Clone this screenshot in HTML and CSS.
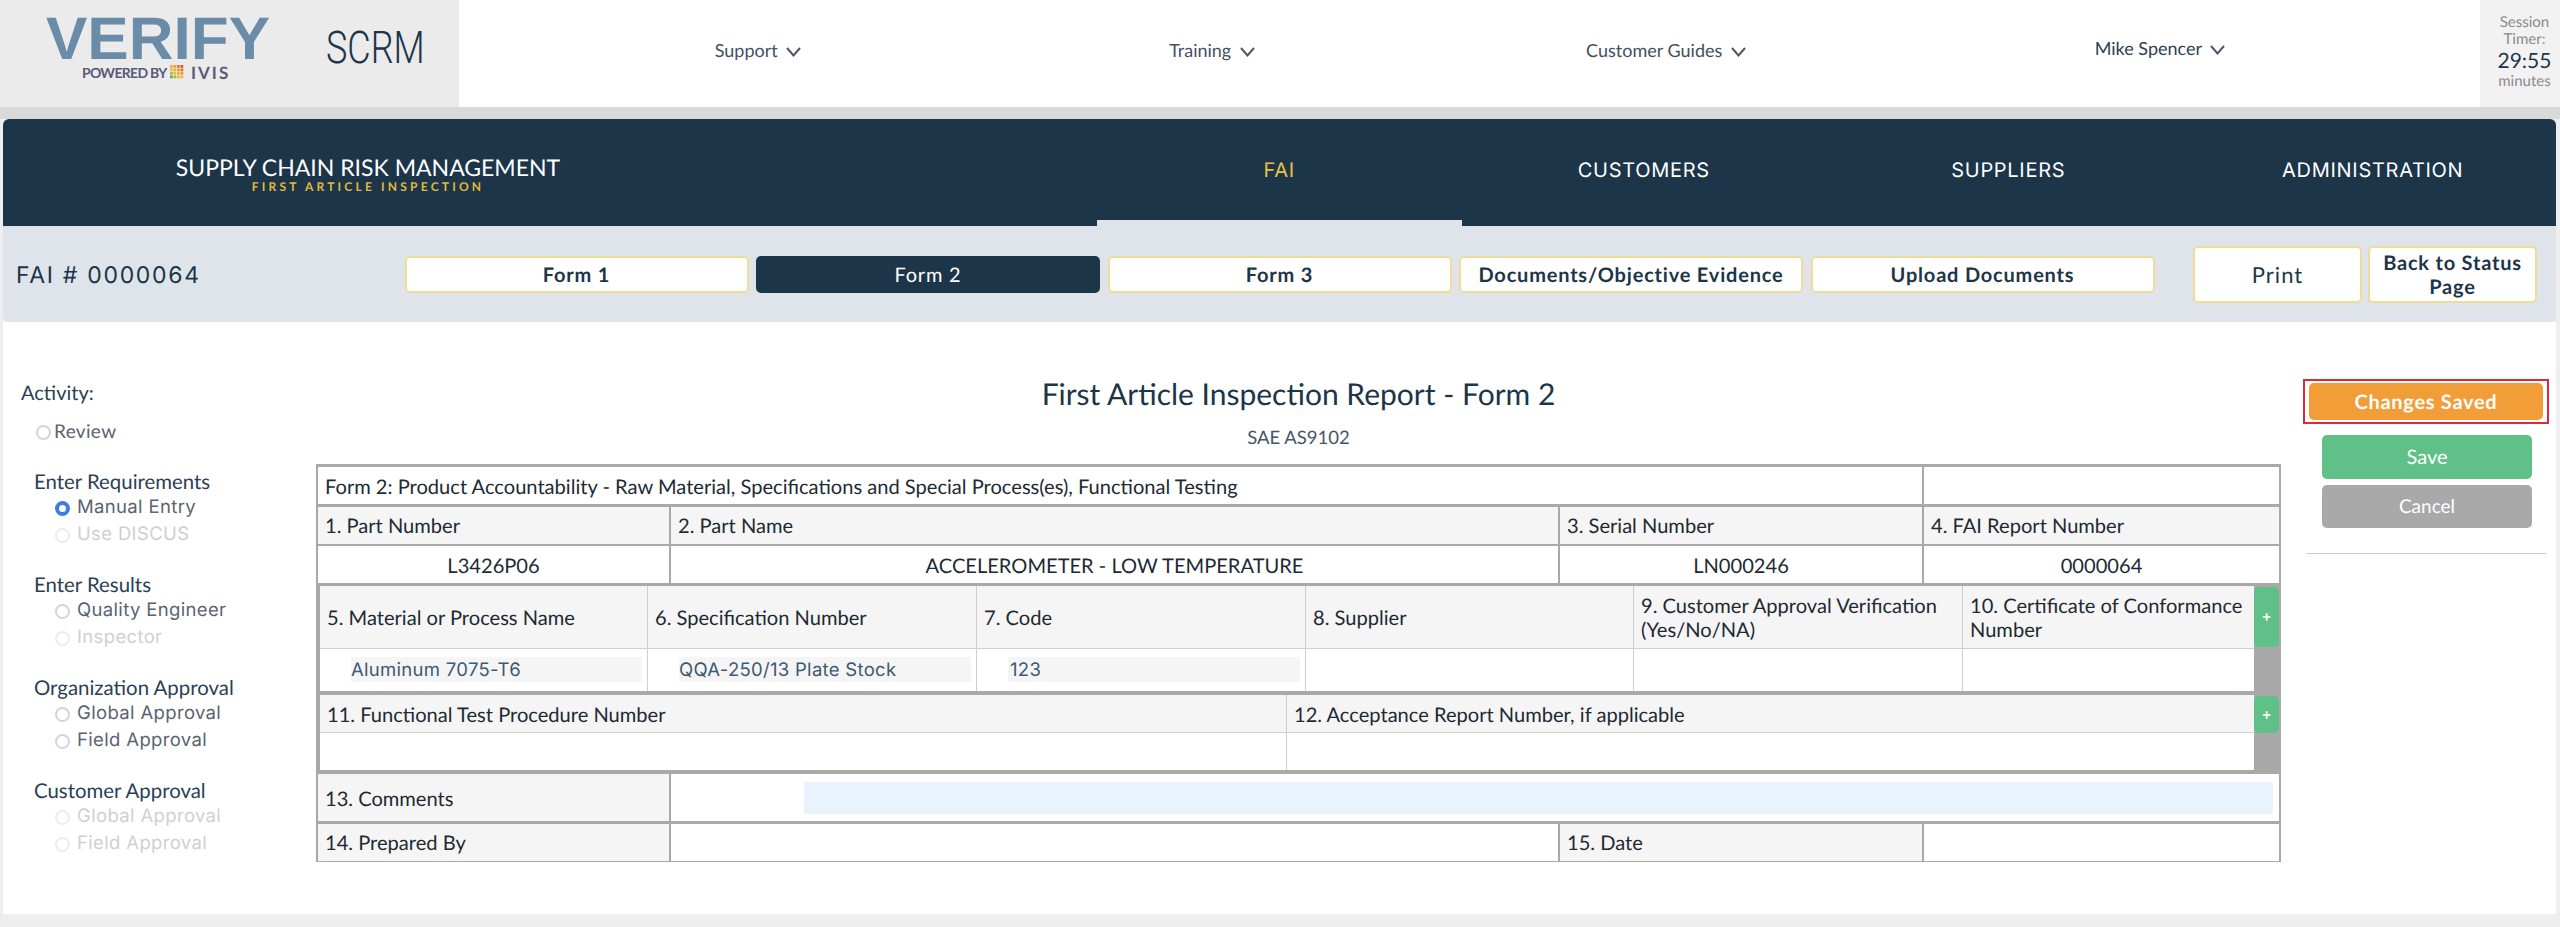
FILE: index.html
```html
<!doctype html>
<html>
<head>
	<meta charset="UTF-8">
	<title>First Article Inspection Report - Form 2</title>
	<link rel="stylesheet" href="styles.css">
</head>
<body>
	<header class="topbar">
		<div class="logo-block">
			<div class="logo">
				<svg class="logo-word" viewBox="0 0 224 46" width="224" height="46"><text x="0" y="43" textLength="224" lengthAdjust="spacingAndGlyphs">VERIFY</text></svg>
				<div class="logo-sub">
					<span class="powered">POWERED BY</span>
					<svg class="ivis-mark" viewBox="0 0 4 4" width="14" height="14">
						<rect x="0" y="0" width=".8" height=".8" fill="#e9b23c"/><rect x="1" y="0" width=".8" height=".8" fill="#ef9a32"/><rect x="2" y="0" width=".8" height=".8" fill="#e8772e"/><rect x="3" y="0" width=".8" height=".8" fill="#dd5a2c"/>
						<rect x="0" y="1" width=".8" height=".8" fill="#e3c33c"/><rect x="1" y="1" width=".8" height=".8" fill="#ecb43a"/><rect x="2" y="1" width=".8" height=".8" fill="#ee9a34"/><rect x="3" y="1" width=".8" height=".8" fill="#e5702f"/>
						<rect x="0" y="2" width=".8" height=".8" fill="#a9bf45"/><rect x="1" y="2" width=".8" height=".8" fill="#d8c23e"/><rect x="2" y="2" width=".8" height=".8" fill="#ecb43a"/><rect x="3" y="2" width=".8" height=".8" fill="#ee9a34"/>
						<rect x="0" y="3" width=".8" height=".8" fill="#6fa84a"/><rect x="1" y="3" width=".8" height=".8" fill="#9cb945"/><rect x="2" y="3" width=".8" height=".8" fill="#d8c23e"/><rect x="3" y="3" width=".8" height=".8" fill="#ecb43a"/>
					</svg>
					<span class="ivis">IVIS</span>
				</div>
			</div>
			<div class="app-name">SCRM</div>
		</div>
		<nav class="topnav">
			<a class="topnav-item">Support <svg class="chev" viewBox="0 0 15 10" width="15" height="10"><polyline points="1,1 7.5,8.5 14,1"/></svg></a>
			<a class="topnav-item">Training <svg class="chev" viewBox="0 0 15 10" width="15" height="10"><polyline points="1,1 7.5,8.5 14,1"/></svg></a>
			<a class="topnav-item">Customer Guides <svg class="chev" viewBox="0 0 15 10" width="15" height="10"><polyline points="1,1 7.5,8.5 14,1"/></svg></a>
			<a class="topnav-item user">Mike Spencer <svg class="chev" viewBox="0 0 15 10" width="15" height="10"><polyline points="1,1 7.5,8.5 14,1"/></svg></a>
		</nav>
		<div class="session">
			<div>Session</div>
			<div>Timer:</div>
			<div class="session-time">29:55</div>
			<div>minutes</div>
		</div>
	</header>
	<div class="strip"></div>

	<div class="wrap">
		<div class="mainbar">
			<div class="brand">
				<div class="brand-title">SUPPLY CHAIN RISK MANAGEMENT</div>
				<div class="brand-sub">FIRST ARTICLE INSPECTION</div>
			</div>
			<a class="mainnav-item active">FAI</a>
			<a class="mainnav-item">CUSTOMERS</a>
			<a class="mainnav-item">SUPPLIERS</a>
			<a class="mainnav-item">ADMINISTRATION</a>
		</div>

		<div class="subbar">
			<div class="fai-no">FAI # 0000064</div>
			<div class="tabs">
				<a class="tab">Form 1</a>
				<a class="tab current">Form 2</a>
				<a class="tab">Form 3</a>
				<a class="tab">Documents/Objective Evidence</a>
				<a class="tab">Upload Documents</a>
			</div>
			<div class="sub-actions">
				<a class="sub-btn print">Print</a>
				<a class="sub-btn">Back to Status Page</a>
			</div>
		</div>

		<div class="content">
			<aside class="side">
				<div class="side-title">Activity:</div>
				<div class="opt review"><span class="radio"></span>Review</div>

				<div class="group">
					<div class="group-title">Enter Requirements</div>
					<div class="opt"><span class="radio on"></span>Manual Entry</div>
					<div class="opt off"><span class="radio"></span>Use DISCUS</div>
				</div>
				<div class="group">
					<div class="group-title">Enter Results</div>
					<div class="opt"><span class="radio"></span>Quality Engineer</div>
					<div class="opt off"><span class="radio"></span>Inspector</div>
				</div>
				<div class="group">
					<div class="group-title">Organization Approval</div>
					<div class="opt"><span class="radio"></span>Global Approval</div>
					<div class="opt"><span class="radio"></span>Field Approval</div>
				</div>
				<div class="group">
					<div class="group-title">Customer Approval</div>
					<div class="opt off"><span class="radio"></span>Global Approval</div>
					<div class="opt off"><span class="radio"></span>Field Approval</div>
				</div>
			</aside>

			<main class="center">
				<h1 class="report-title">First Article Inspection Report - Form 2</h1>
				<div class="report-sub">SAE AS9102</div>

				<div class="form">
					<div class="row cols-top">
						<div class="cell plain">Form 2: Product Accountability - Raw Material, Specifications and Special Process(es), Functional Testing</div>
						<div class="cell plain"></div>
					</div>
					<div class="row cols-four">
						<div class="cell">1. Part Number</div>
						<div class="cell">2. Part Name</div>
						<div class="cell">3. Serial Number</div>
						<div class="cell">4. FAI Report Number</div>
					</div>
					<div class="row cols-four">
						<div class="cell plain value">L3426P06</div>
						<div class="cell plain value">ACCELEROMETER - LOW TEMPERATURE</div>
						<div class="cell plain value">LN000246</div>
						<div class="cell plain value">0000064</div>
					</div>

					<div class="section sec-materials">
						<div class="sec-grid cols-six">
							<div class="cell head">5. Material or Process Name</div>
							<div class="cell head">6. Specification Number</div>
							<div class="cell head">7. Code</div>
							<div class="cell head">8. Supplier</div>
							<div class="cell head">9. Customer Approval Verification (Yes/No/NA)</div>
							<div class="cell head">10. Certificate of Conformance Number</div>
							<div class="cell plain entry"><span class="field">Aluminum 7075-T6</span></div>
							<div class="cell plain entry"><span class="field">QQA-250/13 Plate Stock</span></div>
							<div class="cell plain entry"><span class="field code">123</span></div>
							<div class="cell plain entry"></div>
							<div class="cell plain entry"></div>
							<div class="cell plain entry"></div>
						</div>
						<div class="add-col"><a class="add add-tall">+</a></div>
					</div>

					<div class="section sec-tests">
						<div class="sec-grid cols-two">
							<div class="cell head-sm">11. Functional Test Procedure Number</div>
							<div class="cell head-sm">12. Acceptance Report Number, if applicable</div>
							<div class="cell plain entry-sm"></div>
							<div class="cell plain entry-sm"></div>
						</div>
						<div class="add-col"><a class="add add-short">+</a></div>
					</div>

					<div class="row cols-comments">
						<div class="cell">13. Comments</div>
						<div class="cell plain comment-cell"><span class="comment-input"></span></div>
					</div>
					<div class="row cols-four last">
						<div class="cell">14. Prepared By</div>
						<div class="cell plain"></div>
						<div class="cell">15. Date</div>
						<div class="cell plain"></div>
					</div>
				</div>
			</main>

			<aside class="actions">
				<div class="saved-box"><a class="btn saved">Changes Saved</a></div>
				<a class="btn save">Save</a>
				<a class="btn cancel">Cancel</a>
				<div class="actions-rule"></div>
			</aside>
		</div>
	</div>
</body>
</html>
```

FILE: styles.css
```css
body { margin:0; background:#eeeeee; font-family:"Lato", sans-serif; color:#1c3549; height:927px; overflow:hidden; text-rendering:geometricPrecision; }

/* top bar */
.topbar { display:flex; height:107px; background:#fff; }
.logo-block { display:flex; width:459px; background:#ebebeb; padding:16px 0 0 46px; box-sizing:border-box; }
.logo { width:280px; }
.logo-word { display:block; overflow:visible; font-family:"Liberation Sans", sans-serif; font-weight:700; font-size:60px; fill:#6b8ca8; }
.logo-sub { display:flex; align-items:center; height:16px; margin:2px 0 0 36px; color:#5a5a78; }
.powered { font-size:14px; font-weight:700; letter-spacing:-.7px; width:88px; }
.ivis-mark { margin-right:7px; }
.ivis { font-size:17px; font-weight:700; letter-spacing:2px; }
.app-name { font-family:"Roboto", sans-serif; font-weight:300; font-size:45px; line-height:43px; padding-top:10px; transform:scaleX(.8); transform-origin:left; color:#1c3549; }

.topnav { flex:1; display:grid; grid-template-columns:454px 454px 454px 534px; padding-left:72px; align-items:center; }
.topnav-item { text-align:center; font-size:18px; color:#445063; padding-bottom:7px; }
.topnav-item.user { color:#2e4055; padding-bottom:12px; }
.chev { fill:none; stroke:#4c5766; stroke-width:2; margin-left:4px; }

.session { width:80px; background:#f2f2f2; text-align:center; font-size:15px; line-height:17px; color:#8a8a8a; padding:14px 0 0 9px; box-sizing:border-box; }
.session-time { font-size:21px; line-height:25px; color:#1c3549; }

.strip { height:12px; background:#d9d9d9; }
.wrap { margin:0 4px 0 3px; }

/* dark bar */
.mainbar { display:grid; grid-template-columns:1094px repeat(4, 364.5px); height:107px; background:#1c3549; border-radius:6px 6px 0 0; }
.brand { padding:35px 0 0 172px; width:386px; text-align:center; }
.brand-title { font-size:23px; line-height:26px; color:#fff; white-space:nowrap; }
.brand-sub { font-size:12px; line-height:14px; letter-spacing:3.2px; font-weight:700; color:#e0b93f; white-space:nowrap; }
.mainnav-item { display:flex; align-items:center; justify-content:center; padding-top:1px; font-family:"Inter", sans-serif; font-size:20px; letter-spacing:.7px; color:#fff; border-bottom:6px solid #1c3549; }
.mainnav-item.active { color:#e8c24a; border-bottom-color:#dfe4ea; }

/* form tabs */
.subbar { display:flex; align-items:center; height:96px; background:#dfe4ea; border-radius:0 0 6px 6px; padding-left:13px; box-sizing:border-box; }
.fai-no { width:388.5px; padding-top:2px; font-family:"Inter", sans-serif; font-size:23px; letter-spacing:1.7px; color:#1c3549; }
.tabs { display:grid; grid-template-columns:repeat(5, 344px); column-gap:7.5px; }
.tab { display:flex; align-items:center; justify-content:center; height:37px; box-sizing:border-box; padding-top:2px; background:#fff; border:2px solid #f0dc96; border-radius:5px; font-size:20px; font-weight:700; letter-spacing:.8px; color:#1c3549; }
.tab.current { background:#1c3549; border-color:#1c3549; color:#fff; font-weight:400; }
.sub-actions { display:flex; gap:6px; margin-left:38.5px; }
.sub-btn { display:flex; align-items:center; justify-content:center; width:169px; height:57px; padding:2px 10px 0; box-sizing:border-box; background:#fff; border:2px solid #f0dc96; border-radius:5px; text-align:center; font-size:20px; line-height:24px; font-weight:700; letter-spacing:.8px; color:#1c3549; }
.sub-btn.print { font-weight:400; font-size:22px; letter-spacing:1px; }

/* three columns */
.content { display:grid; grid-template-columns:313px 1965px 275px; height:592px; background:#fff; }

.side { padding:59px 0 0 18px; }
.side-title { font-size:20px; line-height:24px; color:#2a4155; }
.opt { display:flex; align-items:center; height:27px; padding-top:1px; box-sizing:border-box; font-family:"Inter", sans-serif; font-size:18.5px; letter-spacing:.35px; color:#5a6470; padding-left:21px; }
.opt.review { margin-top:12px; padding-left:15px; font-family:"Lato", sans-serif; font-size:19px; }
.opt.off { color:#d0d0d0; }
.group { margin:25px 0 0 13px; }
.group-title { font-size:20.4px; line-height:24px; padding-top:1px; height:23px; color:#2a4155; }
.radio { width:15px; height:15px; box-sizing:border-box; border:2px solid #d4d4d4; border-radius:50%; margin:2px 7px 0 0; background:#fff; flex:none; }
.review .radio { margin-right:3px; }
.off .radio { border-color:#ececec; }
.radio.on { border:4px solid #3d7fe0; }

.center { padding-top:54px; }
.report-title { margin:0; font-size:30px; line-height:36px; font-weight:400; text-align:center; color:#1c3549; }
.report-sub { margin-top:13px; font-size:18.5px; line-height:24px; text-align:center; color:#46566a; }

/* the form table */
.form { margin-top:15px; background:#a9a9a9; padding:3px 2px 2px; height:398px; box-sizing:border-box; }
.row { display:grid; column-gap:2px; margin-bottom:2.5px; height:37px; }
.row.last { margin-bottom:0; }
.cols-top { grid-template-columns:1604px 355px; }
.cols-four { grid-template-columns:351px 887px 362px 355px; }
.cols-comments { grid-template-columns:351px 1608px; height:47px; }
.cell { display:flex; align-items:center; padding:2px 7px 0; background:#f5f5f5; font-size:20.1px; line-height:24px; color:#1e2a33; min-width:0; }
.cell.plain { background:#fff; }
.cell.value { justify-content:center; }

.section { display:grid; grid-template-columns:1934px 1fr; margin:0 -2px 0 2px; }
.sec-materials { margin-bottom:4.5px; }
.sec-tests { margin-bottom:4px; }
.sec-grid { display:grid; gap:1px; background:#cfcfcf; }
.cols-six { grid-template-columns:327px 328px 328px 327px 328px 291px; grid-template-rows:62px 42px; }
.cols-two { grid-template-columns:966px 967px; grid-template-rows:37px 37px; }
.add-col { padding-top:1px; }
.add { display:flex; align-items:center; justify-content:center; margin-right:2px; background:#5fc088; border-radius:5px; color:#fff; font-size:15px; font-weight:700; }
.add-tall { height:60px; }
.add-short { height:37px; }

.cell.entry { padding:0 5px 0 31px; }
.field { display:block; width:100%; height:25px; background:#f5f5f5; font-family:"Inter", sans-serif; font-size:18.5px; line-height:26px; letter-spacing:.3px; color:#3d5a73; white-space:nowrap; }
.field.code { padding-left:2px; }
.comment-cell { padding:0 6px 0 133px; }
.comment-input { display:block; width:100%; height:32px; background:#e9f3fd; }

/* save buttons */
.actions { display:flex; flex-direction:column; padding:57px 7px 0 22px; }
.saved-box { height:45px; box-sizing:border-box; border:2px solid #e0283c; padding:2px 4px; }
.btn { display:flex; align-items:center; justify-content:center; color:#fff; border-radius:5px; font-size:20px; }
.saved { height:37px; background:#f19d38; font-weight:700; letter-spacing:.7px; }
.save { height:44px; margin:11px 17px 0 19px; background:#5fc088; font-size:20px; }
.cancel { height:43px; margin:6px 17px 0 19px; background:#a9a9a9; font-size:19px; }
.actions-rule { height:1px; margin:25px 2px 0 3px; background:#cccccc; }
```
